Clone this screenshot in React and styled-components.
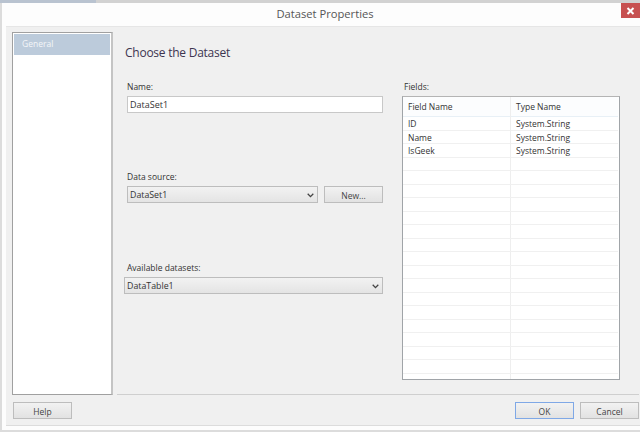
import React from 'react'
import styled, { createGlobalStyle } from 'styled-components'

const Global = createGlobalStyle`
  html, body {
    margin: 0;
    padding: 0;
    width: 640px;
    height: 432px;
    overflow: hidden;
    background: linear-gradient(90deg, #b9c3d0 96px, #d2d2d2 96px) top left / 100% 3px no-repeat #dcdcdc;
  }
  * { box-sizing: border-box; }
`

const Window = styled.div`
  position: relative;
  width: 638px;
  height: 427px;
  margin: 3px 0 0 2px;
  padding: 0 0 4px 4px;
  background: #fdfdfd;
  display: flex;
  flex-direction: column;
  font-family: 'Open Sans', 'Noto Sans', sans-serif;
  font-size: 8.5px;
  color: #333;
`

const TitleBar = styled.div`
  height: 23px;
  flex: none;
  display: flex;
  align-items: center;
  justify-content: center;
  padding: 0 0 2px 4px;
  font-size: 11.2px;
  color: #555;
`

const CloseButton = styled.div`
  position: absolute;
  top: 0;
  right: 0;
  width: 19px;
  height: 15px;
  background: #c75050;
  display: flex;
  align-items: center;
  justify-content: center;
`

const Client = styled.div`
  flex: 1;
  display: flex;
  flex-direction: column;
  background: #f0f0f0;
  border-top: 1px solid #e6e6e6;
  border-bottom: 1px solid #dcdcdc;
  padding: 5px 0 0 6px;
`

const Top = styled.div`
  display: flex;
  height: 363px;
  flex: none;
`

const Sidebar = styled.div`
  width: 101px;
  flex: none;
  background: #fff;
  border-style: solid;
  border-width: 1px 2px 1px 1px;
  border-color: #a0a0a0 #c4c4c4 #a0a0a0 #a0a0a0;
  padding: 1px;
`

const NavItem = styled.div`
  height: 21px;
  background: #bccbdb;
  color: #f4f6f8;
  padding: 0 0 0 8px;
  line-height: 19px;
  font-size: 8.5px;
`

const Main = styled.div`
  flex: 1;
  padding: 13px 0 0 12px;
  display: grid;
  grid-template-columns: 258px 218px;
  column-gap: 19px;
  align-content: start;
`

const Heading = styled.h1`
  grid-column: 1 / 3;
  margin: 0 0 20px;
  height: 16px;
  font-weight: 400;
  font-size: 12px;
  letter-spacing: -0.25px;
  line-height: 16px;
  color: #3d3550;
`

const Left = styled.div`
  display: flex;
  flex-direction: column;
  padding-left: 2px;
`

const Label = styled.label`
  display: block;
  height: 15px;
  line-height: 11px;
  font-size: 8.5px;
  color: #333;
  padding-left: ${p => p.$indent || 0}px;
`

const TextInput = styled.div`
  width: 256px;
  height: 17px;
  flex: none;
  background: #fff;
  border: 1px solid #c8c8c8;
  padding-left: 2px;
  line-height: 15px;
  font-size: 9px;
  margin-bottom: ${p => p.$after}px;
`

const Select = styled.div`
  width: ${p => p.$width}px;
  height: 17px;
  flex: none;
  margin-left: ${p => p.$shift || 0}px;
  background: linear-gradient(#f2f2f2, #e4e4e4);
  border: 1px solid #bdbdbd;
  padding: 1px 3px 0 2px;
  display: flex;
  align-items: center;
  justify-content: space-between;
  font-size: 8.8px;
`

const SelectRow = styled.div`
  display: flex;
  gap: 6px;
  margin-bottom: 59px;
`

const Button = styled.div`
  width: 59px;
  height: 17px;
  flex: none;
  padding-top: 1px;
  background: linear-gradient(#f2f2f2, #e2e2e2);
  border: 1px solid ${p => (p.$focus ? '#7fa8e6' : '#bdbdbd')};
  display: flex;
  align-items: center;
  justify-content: center;
  font-size: 8.5px;
  color: #444;
`

const Table = styled.div`
  width: 218px;
  height: 284px;
  background: #fff;
  border: 1px solid #a0a4a8;
  border-top-color: #b4b4b4;
  padding-right: 1px;
  overflow: hidden;
`

const HeaderRow = styled.div`
  display: grid;
  grid-template-columns: 108px 1fr;
  height: 20px;
  background: #fcfdfe;
  border-bottom: 1px solid #e8f0f6;
  align-items: center;
  line-height: 20px;
`

const Row = styled.div`
  display: grid;
  grid-template-columns: 108px 1fr;
  height: 13.5px;
  border-bottom: 1px solid #f0f0f0;
  line-height: 14px;
`

const Cell = styled.div`
  height: 100%;
  padding-left: 5px;
  border-right: ${p => (p.$last ? 'none' : '1px solid #eeeeee')};
`

const Divider = styled.div`
  height: 1px;
  margin: -1px 1px 0 105px;
  background: #cfcfcf;
  flex: none;
`

const Footer = styled.div`
  display: flex;
  align-items: flex-start;
  padding: 7px 1px 0 1px;
  gap: 6px;
`

const Spacer = styled.div`
  flex: 1;
`

const Chevron = () => (
  <svg width="7" height="5" viewBox="0 0 7 5">
    <path d="M0.7 0.8 L3.5 3.6 L6.3 0.8" fill="none" stroke="#444" strokeWidth="1.3" />
  </svg>
)

const fields = [
  ['ID', 'System.String'],
  ['Name', 'System.String'],
  ['IsGeek', 'System.String'],
]

const rows = [...fields, ...Array.from({ length: 17 }, () => ['', ''])]

export default function App() {
  return (
    <>
      <Global />
      <Window>
        <TitleBar>Dataset Properties</TitleBar>
        <CloseButton>
          <svg width="9" height="8" viewBox="0 0 9 8">
            <path d="M1.5 1 L7.5 7 M7.5 1 L1.5 7" stroke="#fff" strokeWidth="2" />
          </svg>
        </CloseButton>
        <Client>
          <Top>
            <Sidebar>
              <NavItem>General</NavItem>
            </Sidebar>
            <Main>
              <Heading>Choose the Dataset</Heading>
              <Left>
                <Label>Name:</Label>
                <TextInput $after={58}>DataSet1</TextInput>
                <Label>Data source:</Label>
                <SelectRow>
                  <Select $width={191}>
                    DataSet1
                    <Chevron />
                  </Select>
                  <Button>New...</Button>
                </SelectRow>
                <Label>Available datasets:</Label>
                <Select $width={259} $shift={-3}>
                  DataTable1
                  <Chevron />
                </Select>
              </Left>
              <div>
                <Label $indent={2}>Fields:</Label>
                <Table>
                  <HeaderRow>
                    <Cell>Field Name</Cell>
                    <Cell $last>Type Name</Cell>
                  </HeaderRow>
                  {rows.map((r, i) => (
                    <Row key={i}>
                      <Cell>{r[0]}</Cell>
                      <Cell $last>{r[1]}</Cell>
                    </Row>
                  ))}
                </Table>
              </div>
            </Main>
          </Top>
          <Divider />
          <Footer>
            <Button>Help</Button>
            <Spacer />
            <Button $focus>OK</Button>
            <Button>Cancel</Button>
          </Footer>
        </Client>
      </Window>
    </>
  )
}
